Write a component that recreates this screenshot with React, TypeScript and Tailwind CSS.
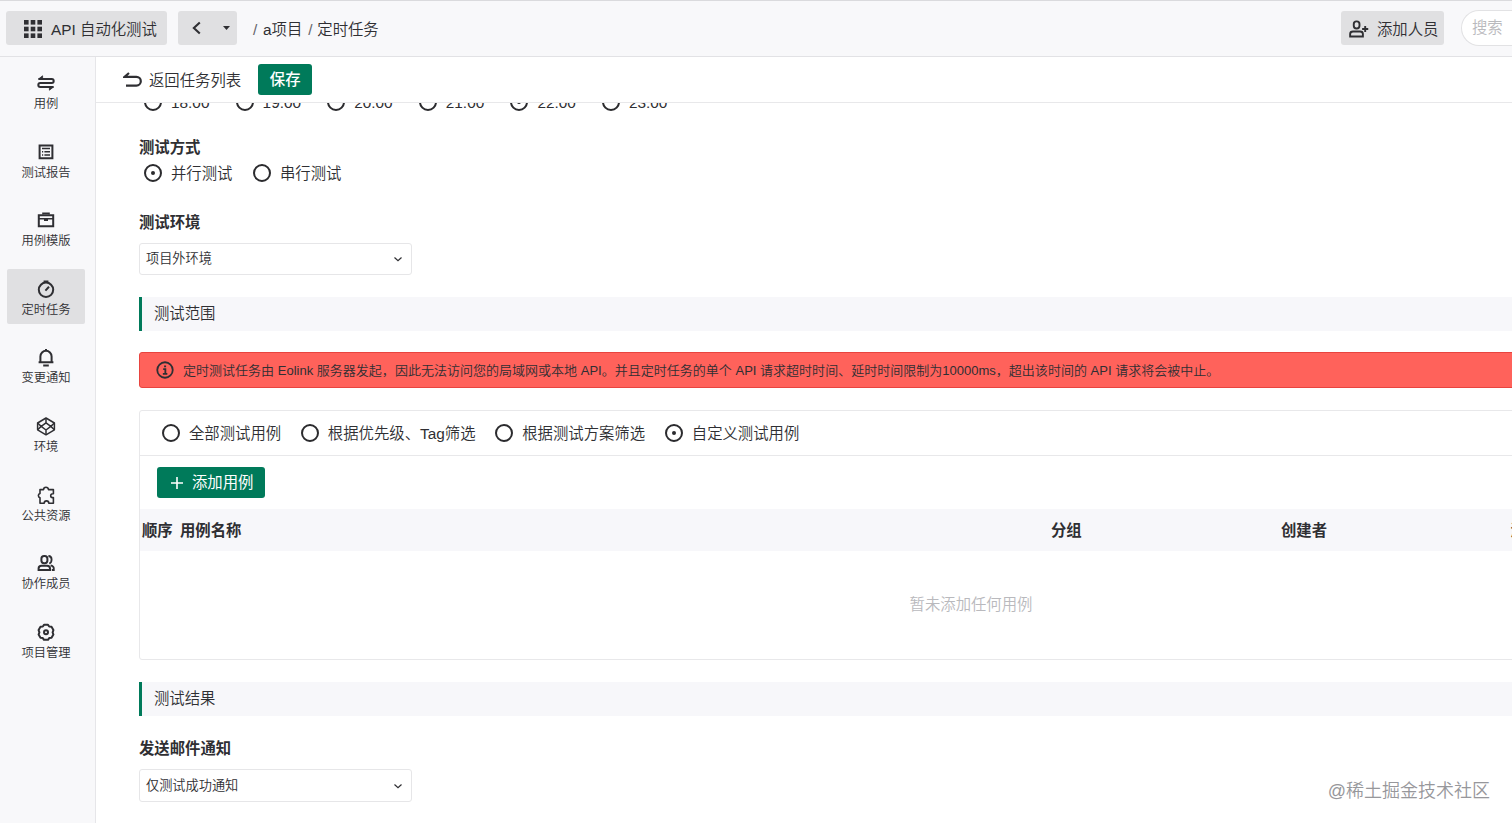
import type { ReactNode } from 'react'

type IconProps = {
  children: ReactNode
  size?: number
  strokeWidth?: number
}

function Icon({ children, size = 20, strokeWidth = 1.8 }: IconProps) {
  return (
    <svg
      width={size}
      height={size}
      viewBox="0 0 20 20"
      fill="none"
      stroke="currentColor"
      strokeWidth={strokeWidth}
      className="shrink-0"
    >
      {children}
    </svg>
  )
}

const navItems: { label: string; icon: ReactNode }[] = [
  {
    label: '用例',
    icon: (
      <>
        <path d="M2.5 6h13.2a2 2 0 0 1 0 4H4.3a2 2 0 0 0 0 4h13.2" />
        <path d="M2.5 6l4.1-3.2V6zM17.5 14l-4.1 3.2V14z" fill="currentColor" strokeWidth={0.8} />
      </>
    ),
  },
  {
    label: '测试报告',
    icon: (
      <>
        <path d="M3.6 3.4h12.8v12.8H3.6z" />
        <path d="M6 6.6h8M6 9.8h1.2M8.4 9.8H14M6 13h1.2M8.4 13H14" strokeWidth={1.5} />
      </>
    ),
  },
  {
    label: '用例模版',
    icon: (
      <>
        <path d="M2.8 5.2h14.4v11H2.8z" />
        <path d="M7 4.6V3.4h6v1.2M3 8.8h14M8 10.2h4" strokeWidth={1.6} />
      </>
    ),
  },
  {
    label: '定时任务',
    icon: (
      <>
        <circle cx="10" cy="10.8" r="7.2" />
        <path d="M7.6 2.4h4.8M9.4 11.6l3.6-3.8" />
      </>
    ),
  },
  {
    label: '变更通知',
    icon: (
      <path d="M4.4 15.2V9.4a5.6 5.6 0 0 1 11.2 0v5.8M2.6 15.3h14.8M10 4.2V2M7.2 18.4h5.6" />
    ),
  },
  {
    label: '环境',
    icon: (
      <g strokeWidth={1.5} strokeLinejoin="round">
        <path d="M10 2 18.4 7v6.800L10 18.800l-8.400-5V7z" />
        <path d="M10 6.800l4.800 3.600L10 14l-4.800-3.600zM10 2v4.800M10 14v4.800M1.600 7l3.600 3.400-3.600 3.400M18.400 7l-3.600 3.400 3.600 3.400" />
      </g>
    ),
  },
  {
    label: '公共资源',
    icon: (
      <path
        d="M4 4.600h3.600a2.400 2.400 0 0 1 4.800 0h5v4.200h-.8a1.900 1.900 0 0 0 0 3.800h.8v5.600h-4.600a2.300 2.300 0 0 0-4.600 0H4v-5.400a2.300 2.300 0 0 1 0-4.400z"
        strokeWidth={1.6}
        strokeLinejoin="round"
      />
    ),
  },
  {
    label: '协作成员',
    icon: (
      <>
        <rect x="5.4" y="3" width="6" height="7.2" rx="2.7" />
        <path d="M2.6 17v-1.600q0-2.600 3-2.600h5.400q3 0 3 2.600V17z" />
        <path d="M12.400 3q3.200.2 3.200 3.600t-2.400 3.800M14.600 12.400q3.200.6 3.200 3.200V17h-2" strokeWidth={1.8} />
      </>
    ),
  },
  {
    label: '项目管理',
    icon: (
      <>
        <path
          d="M8 2.800h4l1.200 1.700 2.300.3 1.900 3.300-.8 2.200.8 2.200-1.900 3.300-2.300.3L12 17.800H8l-1.200-1.700-2.300-.3-1.900-3.300.8-2.200-.8-2.200 1.900-3.300 2.300-.3z"
          strokeLinejoin="round"
        />
        <circle cx="10" cy="10.3" r="2" />
      </>
    ),
  },
]

const hours = ['18:00', '19:00', '20:00', '21:00', '22:00', '23:00']

const scopes = ['全部测试用例', '根据优先级、Tag筛选', '根据测试方案筛选', '自定义测试用例']

function Radio({ label, checked = false }: { label: string; checked?: boolean }) {
  return (
    <label className="flex h-[18px] items-center gap-[9px] whitespace-nowrap">
      <span className="flex size-[18px] shrink-0 items-center justify-center rounded-full border-2 border-[#2b2b2e]">
        {checked && <span className="size-1 rounded-full bg-[#2b2b2e]" />}
      </span>
      <span className="pt-px leading-[18px]">{label}</span>
    </label>
  )
}

function Select({ value, className }: { value: string; className: string }) {
  return (
    <div
      className={`flex w-[273px] items-center justify-between rounded-[3px] border border-[#e6e6e8] pl-1.5 pr-2 text-[13.2px] ${className}`}
    >
      <span className="leading-none">{value}</span>
      <Icon size={10} strokeWidth={2.4}>
        <path d="M3 7l7 6.500 7-6.500" />
      </Icon>
    </div>
  )
}

function SectionTitle({ children }: { children: ReactNode }) {
  return (
    <div className="mt-[22px] flex h-[34px] items-center border-l-[3px] border-[#007a5a] bg-[#f7f7fa] pl-3">
      {children}
    </div>
  )
}

function Header() {
  return (
    <header className="flex h-[57px] shrink-0 items-center border-y border-[#e2e2e5] border-t-[#dadadd] bg-[#f8f8fa] pb-px pl-1.5">
      <div className="flex h-[34px] w-[161px] shrink-0 items-center gap-[9px] rounded-[3px] bg-[#e0e0e2] pl-[18px] pt-px">
        <svg width="18" height="18" viewBox="0 0 18 18" fill="currentColor">
          {[0, 6.7, 13.4].map((y) =>
            [0, 6.7, 13.4].map((x) => (
              <rect key={`${x}-${y}`} x={x} y={y} width="4.600" height="4.600" />
            )),
          )}
        </svg>
        <span className="whitespace-nowrap pt-0.5">API 自动化测试</span>
      </div>
      <div className="ml-[11px] flex h-[34px] w-[59px] shrink-0 items-center justify-between rounded-[3px] bg-[#e0e0e2] pl-3 pr-[7px]">
        <Icon size={14} strokeWidth={3}>
          <path d="M14 2 5.500 10l8.500 8" />
        </Icon>
        <svg width="7" height="4" viewBox="0 0 7 4" fill="currentColor">
          <path d="M0 0h7L3.500 4z" />
        </svg>
      </div>
      <nav className="ml-4 flex items-center whitespace-nowrap pt-[3px]">
        <span className="w-[10px] text-[#66666a]">/</span>
        <span>a项目</span>
        <span className="ml-[6px] w-[9px] text-[#66666a]">/</span>
        <span>定时任务</span>
      </nav>
      <div className="ml-auto flex h-[34px] w-[103px] shrink-0 items-center gap-[8px] rounded-[3px] bg-[#e0e0e2] pl-2 pt-px">
        <svg width="20" height="18" viewBox="0 0 21 18" fill="none" stroke="currentColor" strokeWidth="2">
          <rect x="5" y="1" width="6" height="7.400" rx="2.800" />
          <path d="M1.200 16.800v-2.600q0-2.600 3-2.600h7.400q3 0 3 2.600v2.600zM13.800 9h6.400M17 5.800v6.400" />
        </svg>
        <span className="whitespace-nowrap pt-0.5">添加人员</span>
      </div>
      <div className="ml-[17px] flex h-9 w-[51px] shrink-0 items-center rounded-l-full border border-r-0 border-[#e2e2e4] bg-white pl-2.5 text-[#b9b9bd]">
        搜索
      </div>
    </header>
  )
}

function Sidebar() {
  return (
    <aside className="flex w-24 shrink-0 flex-col gap-[13.600px] border-r border-[#e6e6e9] bg-[#f8f8fa] pl-[7px] pr-2.5 pt-1.5">
      {navItems.map((item) => (
        <div
          key={item.label}
          className={`flex h-[55px] shrink-0 flex-col items-center rounded-[2px] pt-[10px] ${
            item.label === '定时任务' ? 'bg-[#e0e0e2]' : ''
          }`}
        >
          <Icon size={20} strokeWidth={2}>
            {item.icon}
          </Icon>
          <span className="mt-[3px] text-[12.300px] leading-[17px]">{item.label}</span>
        </div>
      ))}
    </aside>
  )
}

export default function App() {
  return (
    <div className="relative flex h-[823px] w-full flex-col overflow-hidden bg-white font-['Liberation_Sans','Noto_Sans_CJK_SC',sans-serif] text-[15.360px] font-[350] leading-[22px] text-[#2f2f33]">
      <Header />
      <div className="flex min-h-0 flex-1">
        <Sidebar />
        <main className="flex min-w-0 flex-1 flex-col">
          <div className="flex h-[46px] shrink-0 items-center border-b border-[#e8e8ea] pl-[27px]">
            <svg width="19" height="16" viewBox="0 0 19 16" fill="none" stroke="currentColor" strokeWidth="2.200">
              <path d="M6 1 1.500 4.800h11.900a4.400 4.400 0 0 1 0 8.800H3" />
            </svg>
            <span className="ml-[7px] pt-0.5">返回任务列表</span>
            <button className="ml-[17px] h-[31px] w-[54px] rounded-[3px] bg-[#007a5a] font-medium text-white">
              保存
            </button>
          </div>

          <div className="min-h-0 flex-1 overflow-hidden pl-[43px]">
            <div className="w-[1664px]">
              <div className="-mt-[10px] flex pl-[5px]">
                {hours.map((hour) => (
                  <div key={hour} className="w-[91.600px]">
                    <Radio label={hour} checked={hour === '22:00'} />
                  </div>
                ))}
              </div>

              <h3 className="mt-[26px] font-bold">测试方式</h3>
              <div className="mt-[5px] flex gap-[20.500px] pl-[5px]">
                <Radio label="并行测试" checked />
                <Radio label="串行测试" />
              </div>

              <h3 className="mt-[30px] font-bold">测试环境</h3>
              <Select value="项目外环境" className="mt-[9px] h-8" />

              <SectionTitle>测试范围</SectionTitle>

              <div className="mt-[21px] flex h-9 items-center rounded-[3px] border border-[#e8443f] bg-[#ff625b] pl-4 text-[13.020px]">
                <Icon size={18} strokeWidth={2}>
                  <circle cx="10" cy="10" r="8.600" />
                  <path d="M8 9h2.400v5M7.600 14.200h5M9 6h2.200" />
                </Icon>
                <span className="ml-[9px] whitespace-nowrap pt-px">
                  定时测试任务由 Eolink 服务器发起，因此无法访问您的局域网或本地 API。并且定时任务的单个 API 请求超时时间、延时时间限制为10000ms，超出该时间的 API 请求将会被中止。
                </span>
              </div>

              <div className="mt-[22px] flex h-[250px] flex-col rounded-[3px] border border-[#e8e8ea]">
                <div className="flex h-[45px] shrink-0 items-center gap-[19.700px] border-b border-[#e8e8ea] pl-[22px]">
                  {scopes.map((scope) => (
                    <Radio key={scope} label={scope} checked={scope === '自定义测试用例'} />
                  ))}
                </div>
                <div className="h-[53px] shrink-0 pl-[17px] pt-[11px]">
                  <button className="flex h-[31px] w-[108px] items-center rounded-[3px] bg-[#007a5a] pl-3.5 font-normal text-white">
                    <svg width="12" height="12" viewBox="0 0 12 12" stroke="currentColor" strokeWidth="1.600">
                      <path d="M6 0v12M0 6h12" />
                    </svg>
                    <span className="ml-[9px]">添加用例</span>
                  </button>
                </div>
                <div className="flex h-[42px] shrink-0 items-center overflow-hidden whitespace-nowrap bg-[#f7f7fa] pl-0.5 pt-px font-bold">
                  <span className="w-[38px] shrink-0">顺序</span>
                  <span className="w-[871px] shrink-0">用例名称</span>
                  <span className="w-[230px] shrink-0">分组</span>
                  <span className="w-[229.500px] shrink-0">创建者</span>
                  <span className="shrink-0">添加时间</span>
                </div>
                <div className="flex flex-1 items-center justify-center text-[#b9b9bd]">
                  暂未添加任何用例
                </div>
              </div>

              <SectionTitle>测试结果</SectionTitle>

              <h3 className="mt-[22px] font-bold">发送邮件通知</h3>
              <Select value="仅测试成功通知" className="mt-[9px] h-[33px]" />
            </div>
          </div>
        </main>
      </div>

      <div className="absolute bottom-5 right-[22px] whitespace-nowrap text-[18px] leading-6 text-[#97979b]">
        @稀土掘金技术社区
      </div>
    </div>
  )
}
